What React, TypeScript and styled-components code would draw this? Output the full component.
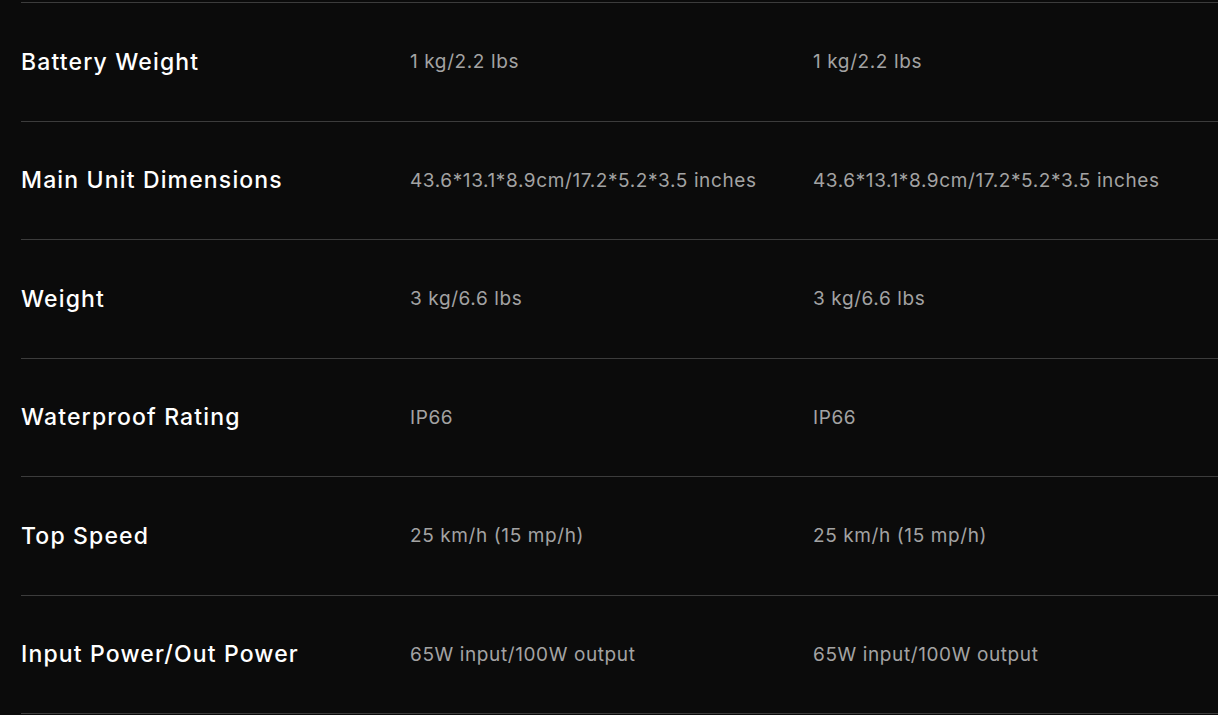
import styled, { createGlobalStyle } from "styled-components";

const GlobalStyle = createGlobalStyle`
  html, body {
    margin: 0;
    padding: 0;
    background: #0b0b0b;
    overflow: hidden;
  }
`;

const Page = styled.div`
  padding: 2px 0 0 21px;
  font-family: Inter, "Liberation Sans", sans-serif;
`;

const Table = styled.div`
  display: flex;
  flex-direction: column;
  border-top: 1px solid #3c3c3c;
`;

const Row = styled.div`
  display: grid;
  grid-template-columns: 389px 403px 1fr;
  align-items: center;
  height: 117.5px;
  border-bottom: 1px solid #3c3c3c;
`;

const Label = styled.div`
  color: #ffffff;
  font-size: 23px;
  font-weight: 500;
  letter-spacing: 1.15px;
`;

const Value = styled.div`
  color: #a3a3a3;
  font-size: 19px;
  font-weight: 400;
  letter-spacing: 0.6px;
`;

const specs = [
  { label: "Battery Weight", a: "1 kg/2.2 lbs", b: "1 kg/2.2 lbs" },
  {
    label: "Main Unit Dimensions",
    a: "43.6*13.1*8.9cm/17.2*5.2*3.5 inches",
    b: "43.6*13.1*8.9cm/17.2*5.2*3.5 inches",
  },
  { label: "Weight", a: "3 kg/6.6 lbs", b: "3 kg/6.6 lbs" },
  { label: "Waterproof Rating", a: "IP66", b: "IP66" },
  { label: "Top Speed", a: "25 km/h (15 mp/h)", b: "25 km/h (15 mp/h)" },
  {
    label: "Input Power/Out Power",
    a: "65W input/100W output",
    b: "65W input/100W output",
  },
];

export default function App() {
  return (
    <>
      <GlobalStyle />
      <Page>
        <Table>
          {specs.map((s) => (
            <Row key={s.label}>
              <Label>{s.label}</Label>
              <Value>{s.a}</Value>
              <Value>{s.b}</Value>
            </Row>
          ))}
        </Table>
      </Page>
    </>
  );
}
